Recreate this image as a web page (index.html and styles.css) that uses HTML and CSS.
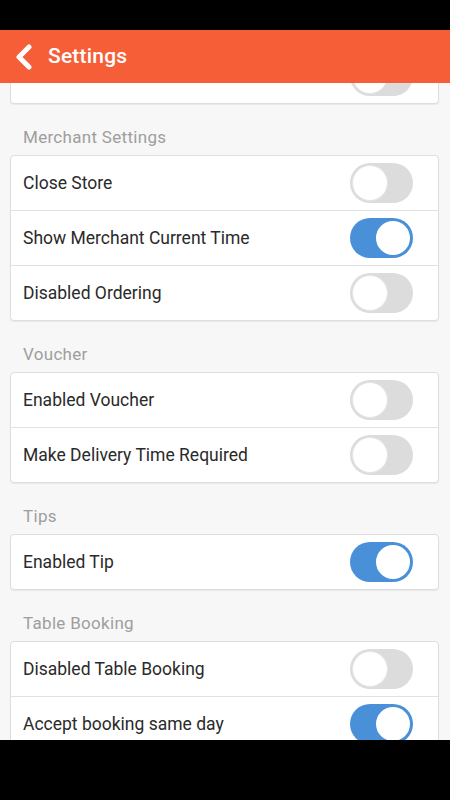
FILE: index.html
```html
<!DOCTYPE html>
<html lang="en">
<head>
    <meta charset="UTF-8">
    <meta name="viewport" content="width=device-width, initial-scale=1.0">
    <title>Settings</title>
    <link rel="stylesheet" href="styles.css">
</head>
<body>
    <!-- Status bar -->
    <div class="status-bar"></div>

    <!-- Header -->
    <header class="top-bar">
        <svg class="back" width="20" height="26" viewBox="0 0 20 26">
            <polyline points="15,3 5,13 15,23" fill="none" stroke="#fff" stroke-width="5" stroke-linecap="round" stroke-linejoin="round"/>
        </svg>
        <h1>Settings</h1>
    </header>

    <main class="content">
        <div class="scroll">
            <div class="card card-cut">
                <div class="row">
                    <span></span>
                    <div class="toggle"><span class="knob"></span></div>
                </div>
            </div>

            <h2 class="group-title">Merchant Settings</h2>
            <div class="card">
                <div class="row">
                    <span>Close Store</span>
                    <div class="toggle"><span class="knob"></span></div>
                </div>
                <div class="row">
                    <span>Show Merchant Current Time</span>
                    <div class="toggle on"><span class="knob"></span></div>
                </div>
                <div class="row">
                    <span>Disabled Ordering</span>
                    <div class="toggle"><span class="knob"></span></div>
                </div>
            </div>

            <h2 class="group-title">Voucher</h2>
            <div class="card">
                <div class="row">
                    <span>Enabled Voucher</span>
                    <div class="toggle"><span class="knob"></span></div>
                </div>
                <div class="row">
                    <span>Make Delivery Time Required</span>
                    <div class="toggle"><span class="knob"></span></div>
                </div>
            </div>

            <h2 class="group-title">Tips</h2>
            <div class="card">
                <div class="row">
                    <span>Enabled Tip</span>
                    <div class="toggle on"><span class="knob"></span></div>
                </div>
            </div>

            <h2 class="group-title">Table Booking</h2>
            <div class="card">
                <div class="row">
                    <span>Disabled Table Booking</span>
                    <div class="toggle"><span class="knob"></span></div>
                </div>
                <div class="row">
                    <span>Accept booking same day</span>
                    <div class="toggle on"><span class="knob"></span></div>
                </div>
            </div>
        </div>
    </main>

    <!-- Navigation bar -->
    <div class="nav-bar"></div>
</body>
</html>
```

FILE: styles.css
```css
/* General Styling */
body {
    margin: 0;
    background: #000;
    font-family: Roboto, "Noto Sans", sans-serif;
}

.status-bar {
    height: 30px;
    background: #000;
}

/* Header */
.top-bar {
    height: 53px;
    background: #f65e37;
    display: flex;
    align-items: center;
    padding-left: 14px;
}

.top-bar .back {
    margin-right: 14px;
}

.top-bar h1 {
    margin: 0 0 2px;
    color: #fff;
    font-size: 21px;
    font-weight: 500;
    letter-spacing: 0.2px;
}

/* Content */
.content {
    height: 657px;
    overflow: hidden;
    background: #f7f7f7;
}

.card {
    margin: 0 11px 0 10px;
    background: #fff;
    border: 1px solid #dedede;
    border-radius: 4px;
    box-shadow: 0 1px 1px rgba(0, 0, 0, 0.06);
}

.card-cut {
    margin-top: -35px; /* first card scrolled under the header */
}

.group-title {
    margin: 0;
    padding: 23px 23px 8px;
    line-height: 20px;
    font-size: 17px;
    font-weight: 400;
    letter-spacing: 0.3px;
    color: #9e9e9e;
}

.row {
    height: 54px;
    display: flex;
    align-items: center;
    justify-content: space-between;
    padding: 0 25px 0 12px;
    border-bottom: 1px solid #e2e2e2;
    font-size: 17.5px;
    color: #2a2a2a;
}

.row:last-child {
    border-bottom: none;
}

/* Switch */
.toggle {
    width: 63px;
    height: 40px;
    box-sizing: border-box;
    padding: 2px;
    border-radius: 20px;
    background: #dcdcdc;
    display: flex;
    align-items: center;
}

.toggle .knob {
    width: 36px;
    height: 36px;
    box-sizing: border-box;
    border-radius: 50%;
    background: #fff;
    border: 1px solid #e4e4e4;
}

.toggle.on {
    background: #4a90d9;
    justify-content: flex-end;
    padding: 1px;
}

.toggle.on .knob {
    width: 38px;
    height: 38px;
    border: 2px solid #4a90d9;
}

.nav-bar {
    height: 60px;
    background: #000;
}
```
